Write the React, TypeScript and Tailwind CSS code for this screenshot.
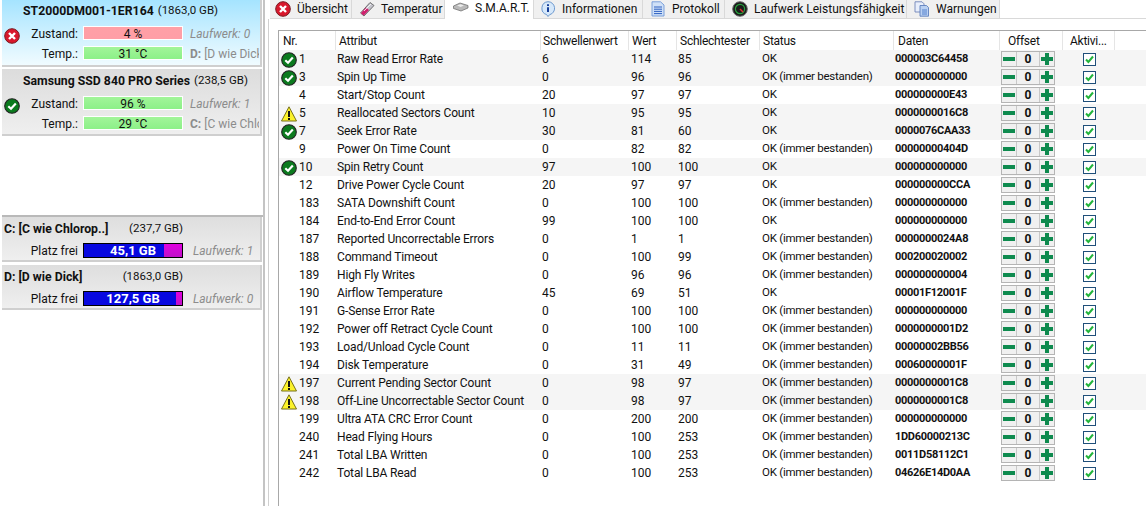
import React from "react";

type Mark = "ok" | "warn" | null;
type Row = [Mark, string, string, string, string, string, boolean, string];

const rows: Row[] = [
  ["ok", "1", "Raw Read Error Rate", "6", "114", "85", false, "000003C64458"],
  ["ok", "3", "Spin Up Time", "0", "96", "96", true, "000000000000"],
  [null, "4", "Start/Stop Count", "20", "97", "97", false, "000000000E43"],
  ["warn", "5", "Reallocated Sectors Count", "10", "95", "95", false, "0000000016C8"],
  ["ok", "7", "Seek Error Rate", "30", "81", "60", false, "0000076CAA33"],
  [null, "9", "Power On Time Count", "0", "82", "82", true, "00000000404D"],
  ["ok", "10", "Spin Retry Count", "97", "100", "100", false, "000000000000"],
  [null, "12", "Drive Power Cycle Count", "20", "97", "97", false, "000000000CCA"],
  [null, "183", "SATA Downshift Count", "0", "100", "100", true, "000000000000"],
  [null, "184", "End-to-End Error Count", "99", "100", "100", false, "000000000000"],
  [null, "187", "Reported Uncorrectable Errors", "0", "1", "1", true, "0000000024A8"],
  [null, "188", "Command Timeout", "0", "100", "99", true, "000200020002"],
  [null, "189", "High Fly Writes", "0", "96", "96", true, "000000000004"],
  [null, "190", "Airflow Temperature", "45", "69", "51", false, "00001F12001F"],
  [null, "191", "G-Sense Error Rate", "0", "100", "100", true, "000000000000"],
  [null, "192", "Power off Retract Cycle Count", "0", "100", "100", true, "0000000001D2"],
  [null, "193", "Load/Unload Cycle Count", "0", "11", "11", true, "00000002BB56"],
  [null, "194", "Disk Temperature", "0", "31", "49", true, "00060000001F"],
  ["warn", "197", "Current Pending Sector Count", "0", "98", "97", true, "0000000001C8"],
  ["warn", "198", "Off-Line Uncorrectable Sector Count", "0", "98", "97", true, "0000000001C8"],
  [null, "199", "Ultra ATA CRC Error Count", "0", "200", "200", true, "000000000000"],
  [null, "240", "Head Flying Hours", "0", "100", "253", true, "1DD60000213C"],
  [null, "241", "Total LBA Written", "0", "100", "253", true, "0011D58112C1"],
  [null, "242", "Total LBA Read", "0", "100", "253", true, "04626E14D0AA"],
];

const cols = "grid grid-cols-[57px_205px_88px_48px_83px_134px_106px_63px_52px]";

function OkIcon({ size = 16 }: { size?: number }) {
  return (
    <svg width={size} height={size} viewBox="0 0 16 16" className="shrink-0">
      <circle cx="8" cy="8" r="7.3" fill="#0b7a1e" stroke="#222" strokeWidth="1.1" />
      <path d="M4.3 8.3 7 10.8 11.8 5.6" fill="none" stroke="#fff" strokeWidth="2.2" />
    </svg>
  );
}

function ErrIcon({ size = 16 }: { size?: number }) {
  return (
    <svg width={size} height={size} viewBox="0 0 16 16" className="shrink-0">
      <circle cx="8" cy="8" r="7.3" fill="#d8182c" stroke="#7a1a20" strokeWidth="1" />
      <path d="M5 5l6 6M11 5l-6 6" stroke="#fff" strokeWidth="2.4" />
    </svg>
  );
}

function WarnIcon() {
  return (
    <svg width="16" height="16" viewBox="0 0 16 16" className="shrink-0">
      <path d="M8 .8 15.5 15H.5Z" fill="#fbf22a" stroke="#77701a" strokeWidth="1" />
      <path d="M8 5v6" stroke="#111" strokeWidth="2" />
      <path d="M8 12v2" stroke="#111" strokeWidth="2" />
    </svg>
  );
}

function DiskCard({ name, size, mark, health, temp, drive, vol, selected, healthBad }: {
  name: string; size: string; mark: "ok" | "err"; health: string; temp: string; drive: string; vol: string; selected?: boolean; healthBad?: boolean;
}) {
  const bar = "h-[14px] w-[100px] border border-white text-center text-[12px] leading-[14px]";
  return (
    <div className={`h-[67px] w-[260px] border-b-2 border-r-2 border-[#cfcfcf] pl-[21px] ${selected ? "bg-gradient-to-b from-[#a5e4ff] to-[#f0fbff]" : "bg-gradient-to-b from-[#dcdcdc] to-[#efefef] pt-[1px]"}`}>
      <div className="flex h-[22px] items-center gap-[4px] whitespace-nowrap">
        <span className="text-[12.25px] font-bold">{name}</span>
        <span className="text-[11.5px]">{size}</span>
      </div>
      <div className="relative mt-[4px] flex flex-col gap-[6px]">
        <div className="absolute left-[-19px] top-[2px]">{mark === "ok" ? <OkIcon /> : <ErrIcon />}</div>
        <div className="flex h-[14px] items-center">
          <span className="w-[55px] pt-[2px] text-right">Zustand:</span>
          <div className={`ml-[5px] ${bar} ${healthBad ? "bg-gradient-to-b from-[#ffa0a6] to-[#ff9ea6]" : "bg-gradient-to-b from-[#a2f59a] to-[#8cf088]"}`}>{health}</div>
          <span className="ml-[7px] whitespace-nowrap pt-[2px] italic text-[#8c8c8c]">Laufwerk: {drive}</span>
        </div>
        <div className="flex h-[14px] items-center">
          <span className="w-[55px] pt-[2px] text-right">Temp.:</span>
          <div className={`ml-[5px] ${bar} bg-gradient-to-b from-[#a2f59a] to-[#8cf088]`}>{temp}</div>
          <span className="ml-[7px] w-[69px] overflow-hidden whitespace-nowrap pt-[2px] text-[#8c8c8c]">
            <b>{vol[0]}:</b> {vol.slice(3)}
          </span>
        </div>
      </div>
    </div>
  );
}

function VolumeCard({ name, size, free, used, drive }: { name: string; size: string; free: string; used: number; drive: string }) {
  return (
    <div className="h-[45px] w-[260px] border-b-2 border-r-2 border-[#cfcfcf] bg-gradient-to-b from-[#dedede] to-[#efefef] pl-[2px]">
      <div className="flex h-[24px] items-center justify-between pr-[77px]">
        <span className="whitespace-nowrap text-[12.25px] font-bold">{name}</span>
        <span className="text-[11.5px]">{size}</span>
      </div>
      <div className="mt-[2px] flex h-[15px] items-center">
        <span className="w-[74px] text-right">Platz frei</span>
        <div className="relative ml-[5px] flex h-[15px] w-[100px] justify-end border border-black bg-[#0808e0]">
          <div className="bg-gradient-to-b from-[#e000e0] to-[#c010c8]" style={{ width: used }} />
          <div className="absolute inset-0 text-center text-[13px] font-bold leading-[14px] text-white">{free}</div>
        </div>
        <span className="ml-[10px] whitespace-nowrap italic text-[#8c8c8c]">Laufwerk: {drive}</span>
      </div>
    </div>
  );
}

function TabIcon({ kind }: { kind: string }) {
  if (kind === "err") return <ErrIcon />;
  if (kind === "temp")
    return (
      <svg width="16" height="16" viewBox="0 0 16 16" className="shrink-0">
        <path d="M1.5 12 11 1.5 15 4.5 5 15Z" fill="#c4c4cc" stroke="#555" strokeWidth="0.8" />
        <path d="M1.8 12.2 7 6.5 10 9 4.8 14.6Z" fill="#d0216e" />
        <path d="M5 10 12 3" stroke="#fff" strokeWidth="0.8" />
      </svg>
    );
  if (kind === "disk")
    return (
      <svg width="16" height="14" viewBox="0 0 16 14" className="shrink-0">
        <path d="M0.5 5 7 2l8 2.5V7l-7 3-7.5-2.5Z" fill="#b9b9b9" stroke="#666" strokeWidth="0.7" />
        <path d="M4 4.6 7.5 3.2 11 4.4 7.6 6Z" fill="#ececec" />
      </svg>
    );
  if (kind === "info")
    return (
      <svg width="16" height="16" viewBox="0 0 16 16" className="shrink-0">
        <path d="M8 .7a6.6 6.6 0 0 1 1.6 13L8 15.5 6.6 13.6A6.6 6.6 0 0 1 8 .7Z" fill="#d6e8fa" stroke="#5f8fc9" strokeWidth="0.9" />
        <path d="M8 6.3V11" stroke="#173f9a" strokeWidth="2" />
        <path d="M8 3.2v1.8" stroke="#173f9a" strokeWidth="2" />
      </svg>
    );
  if (kind === "log")
    return (
      <svg width="16" height="16" viewBox="0 0 16 16" className="shrink-0">
        <path d="M2 .8H10.5L14 4v11H2Z" fill="#cfe0f7" stroke="#6f97d6" strokeWidth="0.9" />
        <path d="M4 6h8M4 8.2h8M4 10.4h8M4 12.6h8" stroke="#2c5fc0" strokeWidth="1" />
      </svg>
    );
  if (kind === "gauge")
    return (
      <svg width="16" height="16" viewBox="0 0 16 16" className="shrink-0">
        <circle cx="8" cy="8" r="7.3" fill="#1b1b1b" stroke="#666" />
        <circle cx="8" cy="8" r="4.6" fill="none" stroke="#27a33d" strokeWidth="1.2" />
        <path d="M8 8l3 3" stroke="#e03030" strokeWidth="1.4" />
      </svg>
    );
  return (
    <svg width="16" height="16" viewBox="0 0 16 16" className="shrink-0">
      <path d="M1 .8h7l2 2V11H1Z" fill="#e8eefb" stroke="#6f84b8" strokeWidth="0.9" />
      <path d="M6 4.5h6.5l2 2v8.7H6Z" fill="#b9d0f2" stroke="#5f80bd" strokeWidth="0.9" />
      <path d="M8 9h5M8 11h5M8 13h5" stroke="#4a78c8" strokeWidth="0.9" />
    </svg>
  );
}

const tabs = [
  { label: "Übersicht", icon: "err", cls: "w-[82px] pl-[5px]" },
  { label: "Temperatur", icon: "temp", cls: "w-[93px] pl-[7px]" },
  { label: "S.M.A.R.T.", icon: "disk", cls: "w-[89px] pl-[8px]", active: true },
  { label: "Informationen", icon: "info", cls: "w-[109px] pl-[6px]" },
  { label: "Protokoll", icon: "log", cls: "w-[82px] pl-[7px]" },
  { label: "Laufwerk Leistungsfähigkeit", icon: "gauge", cls: "w-[182px] pl-[7px]" },
  { label: "Warnungen", icon: "warnings", cls: "w-[93px] pl-[7px]" },
];

const headers = [
  { t: "Nr.", c: "pl-[4px]" },
  { t: "Attribut", c: "pl-[3px]" },
  { t: "Schwellenwert", c: "pl-[2px]" },
  { t: "Wert", c: "pl-[3px]" },
  { t: "Schlechtester", c: "pl-[3px]" },
  { t: "Status", c: "pl-[3px]" },
  { t: "Daten", c: "pl-[4px]" },
  { t: "Offset", c: "pl-[8px]" },
  { t: "Aktivi...", c: "pl-[7px]" },
];

function Stepper() {
  return (
    <div className="ml-[1px] flex h-[16px] w-[54px] border border-[#b4b4b4] bg-[#f0f0f0]">
      <div className="flex w-[15px] items-center justify-center border-r border-[#c8c8c8]">
        <div className="h-[4px] w-[12px] bg-[#0e8a4e]" />
      </div>
      <div className="flex-1 text-center text-[12px] font-bold leading-[15px]">0</div>
      <div className="relative flex w-[15px] items-center justify-center border-l border-[#c8c8c8]">
        <div className="h-[4px] w-[12px] bg-[#0e8a4e]" />
        <div className="absolute left-[5px] top-[1px] h-[12px] w-[4px] bg-[#0e8a4e]" />
      </div>
    </div>
  );
}

function Check() {
  return (
    <div className="flex h-[13px] w-[13px] items-center justify-center border border-[#1f4f7a] bg-white">
      <svg width="9" height="9" viewBox="0 0 9 9">
        <path d="M1 4.5 3.4 7 8 1.5" fill="none" stroke="#22b43c" strokeWidth="2" />
      </svg>
    </div>
  );
}

export default function App() {
  return (
    <div className="flex h-[506px] w-[1146px] overflow-hidden bg-white font-['Roboto',sans-serif] text-[12px] text-[#111]">
      <aside className="flex w-[265px] shrink-0 flex-col border-r-2 border-[#c4c4c4] pl-[2px]">
        <DiskCard selected name="ST2000DM001-1ER164" size="(1863,0 GB)" mark="err" health="4 %" healthBad temp="31 °C" drive="0" vol="D: [D wie Dick" />
        <div className="h-[2px]" />
        <DiskCard name="Samsung SSD 840 PRO Series" size="(238,5 GB)" mark="ok" health="96 %" temp="29 °C" drive="1" vol="C: [C wie Chlorop" />
        <div className="mt-[79px] border-t-2 border-[#b9b9b9]">
          <VolumeCard name="C: [C wie Chlorop..]" size="(237,7 GB)" free="45,1 GB" used={18} drive="1" />
          <div className="h-[3px]" />
          <VolumeCard name="D: [D wie Dick]" size="(1863,0 GB)" free="127,5 GB" used={6} drive="0" />
        </div>
      </aside>

      <main className="flex min-w-0 flex-1 flex-col pl-[3px]">
        <nav className="ml-[2px] flex h-[19px] shrink-0 border-b border-[#d9d9d9]">
          {tabs.map((t) => (
            <div key={t.label} className={`flex items-center gap-[6px] border-r border-[#d9d9d9] ${t.cls} ${t.active ? "h-[19px] bg-white pb-[3px]" : "h-[18px] bg-[#f0f0f0]"}`}>
              <TabIcon kind={t.icon} />
              <span className="whitespace-nowrap">{t.label}</span>
            </div>
          ))}
        </nav>
        <div className="flex-1 border-l border-[#d0d0d0] pl-[9px] pt-[11px]">
          <div className="h-full border-l border-t border-[#a8a8a8]">
            <div className={`${cols} h-[19px] tracking-[-0.25px]`}>
              {headers.map((h) => (
                <div key={h.t} className={`flex items-center border-r border-[#e5e5e5] ${h.c}`}>{h.t}</div>
              ))}
            </div>
            {rows.map((r) => (
              <div key={r[1]} className={`${cols} h-[18px] items-center ${r[0] ? "bg-[#f5f5f5]" : ""}`}>
                <div className="flex items-center pl-[2px]">
                  <div className="w-[18px]">{r[0] === "ok" ? <OkIcon /> : r[0] === "warn" ? <WarnIcon /> : null}</div>
                  <span className="pb-[2px]">{r[1]}</span>
                </div>
                <div className="whitespace-nowrap pb-[2px] pl-[1px] tracking-[-0.15px]">{r[2]}</div>
                <div className="pb-[2px] pl-[1px]">{r[3]}</div>
                <div className="pb-[2px] pl-[2px]">{r[4]}</div>
                <div className="pb-[2px] pl-[1px]">{r[5]}</div>
                <div className="whitespace-nowrap pb-[2px] pl-[2px] text-[11.5px] tracking-[-0.25px]">{r[6] ? "OK (immer bestanden)" : "OK"}</div>
                <div className="pb-[2px] pl-[1px] text-[11px] font-bold tracking-[-0.3px]">{r[7]}</div>
                <div className="flex pb-[2px]"><Stepper /></div>
                <div className="flex justify-center pb-[2px]"><Check /></div>
              </div>
            ))}
          </div>
        </div>
      </main>
    </div>
  );
}
